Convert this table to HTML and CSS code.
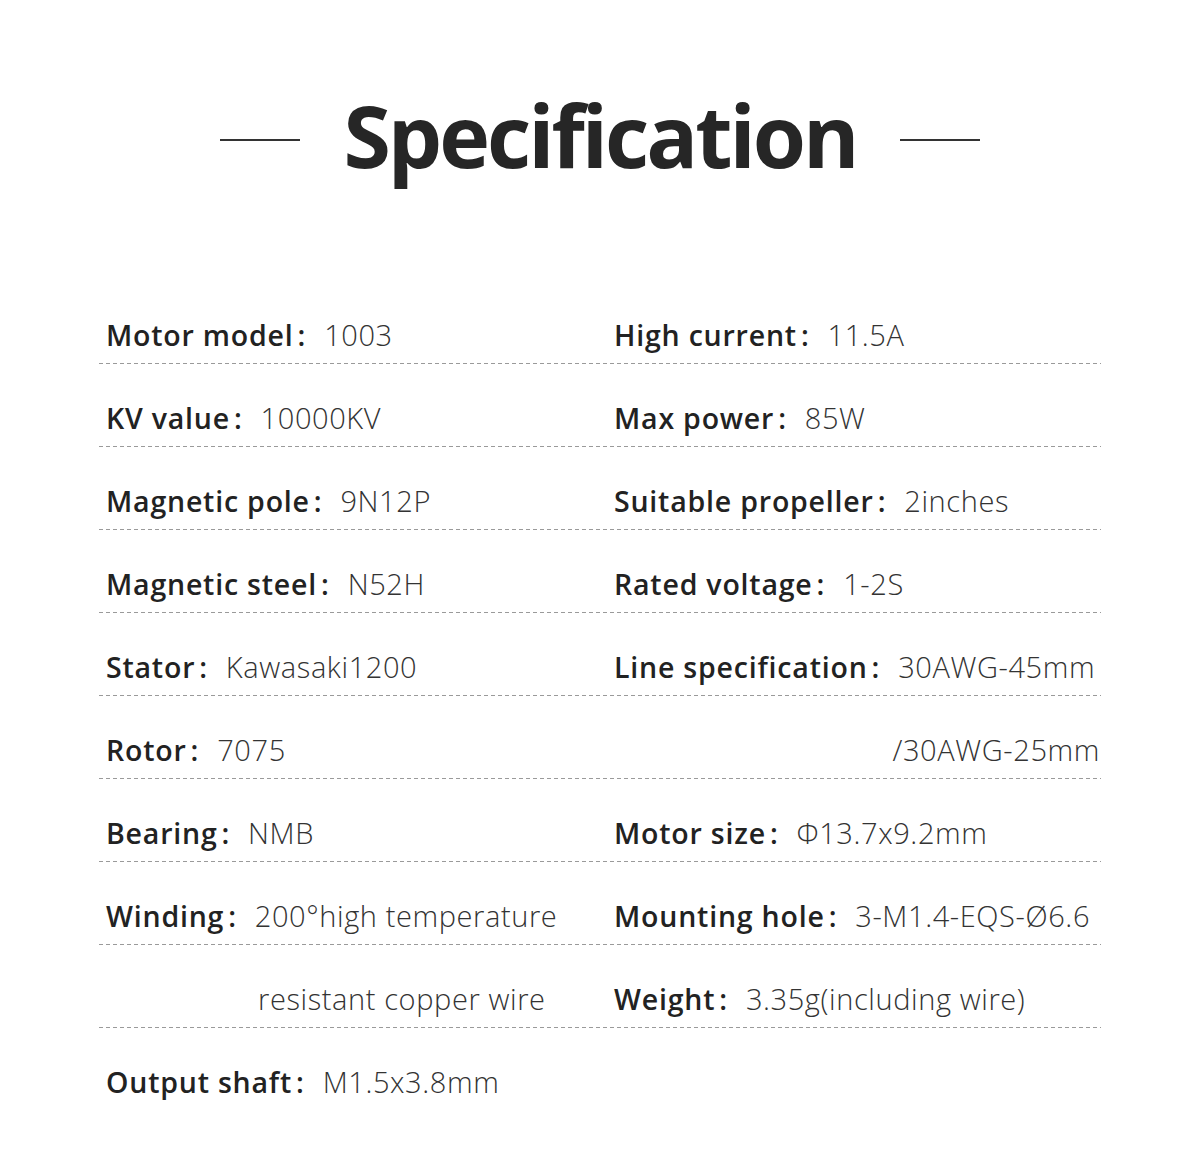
FILE: index.html
```html
<!DOCTYPE html>
<html>
<head>
<meta charset="utf-8">
<link rel="stylesheet" href="styles.css">
</head>
<body>
<div class="page">
  <header class="title-row">
    <span class="rule"></span>
    <h1 class="title">Specification</h1>
    <span class="rule"></span>
  </header>
  <section class="specs">
    <div class="row">
      <div class="cell"><span class="label">Motor model<span class="colon">:</span></span><span class="value">1003</span></div>
      <div class="cell"><span class="label">High current<span class="colon">:</span></span><span class="value">11.5A</span></div>
    </div>
    <div class="row">
      <div class="cell"><span class="label">KV value<span class="colon">:</span></span><span class="value">10000KV</span></div>
      <div class="cell"><span class="label">Max power<span class="colon">:</span></span><span class="value">85W</span></div>
    </div>
    <div class="row">
      <div class="cell"><span class="label">Magnetic pole<span class="colon">:</span></span><span class="value">9N12P</span></div>
      <div class="cell"><span class="label">Suitable propeller<span class="colon">:</span></span><span class="value">2inches</span></div>
    </div>
    <div class="row">
      <div class="cell"><span class="label">Magnetic steel<span class="colon">:</span></span><span class="value">N52H</span></div>
      <div class="cell"><span class="label">Rated voltage<span class="colon">:</span></span><span class="value">1-2S</span></div>
    </div>
    <div class="row">
      <div class="cell"><span class="label">Stator<span class="colon">:</span></span><span class="value">Kawasaki1200</span></div>
      <div class="cell"><span class="label">Line specification<span class="colon">:</span></span><span class="value">30AWG-45mm</span></div>
    </div>
    <div class="row">
      <div class="cell"><span class="label">Rotor<span class="colon">:</span></span><span class="value">7075</span></div>
      <div class="cell cell-right"><span class="value">/30AWG-25mm</span></div>
    </div>
    <div class="row">
      <div class="cell"><span class="label">Bearing<span class="colon">:</span></span><span class="value">NMB</span></div>
      <div class="cell"><span class="label">Motor size<span class="colon">:</span></span><span class="value">Φ13.7x9.2mm</span></div>
    </div>
    <div class="row">
      <div class="cell"><span class="label">Winding<span class="colon">:</span></span><span class="value">200°high temperature</span></div>
      <div class="cell"><span class="label">Mounting hole<span class="colon">:</span></span><span class="value">3-M1.4-EQS-Ø6.6</span></div>
    </div>
    <div class="row">
      <div class="cell"><span class="value cont">resistant copper wire</span></div>
      <div class="cell"><span class="label">Weight<span class="colon">:</span></span><span class="value">3.35g(including wire)</span></div>
    </div>
    <div class="row last">
      <div class="cell"><span class="label">Output shaft<span class="colon">:</span></span><span class="value">M1.5x3.8mm</span></div>
      <div class="cell"></div>
    </div>
  </section>
</div>
</body>
</html>
```
FILE: styles.css
```css
html, body {
  margin: 0;
  padding: 0;
  background: #ffffff;
}
body {
  width: 1200px;
  height: 1173px;
  font-family: "Open Sans", "Noto Sans", sans-serif;
  color: #222;
}
.page {
  padding-top: 83px;
}
.title-row {
  display: flex;
  align-items: center;
  justify-content: center;
  gap: 43px;
}
.rule {
  width: 80px;
  height: 2px;
  background: #333;
}
.title {
  margin: 0;
  padding-bottom: 10px;
  font-size: 86px;
  font-weight: 700;
  line-height: 104px;
  color: #262626;
  letter-spacing: -3px;
}
.specs {
  margin: 85px 99px 0 99px;
}
.row {
  display: grid;
  grid-template-columns: 508px 1fr;
  padding: 33px 0 9px 0;
  height: 40px;
  background-image: repeating-linear-gradient(to right, #9a9a9a 0 4px, transparent 4px 7px);
  background-size: 100% 1px;
  background-repeat: no-repeat;
  background-position: left bottom;
  border-bottom: 1px solid transparent;
}
.row.last {
  background-image: none;
}
.cell {
  display: flex;
  align-items: center;
  padding-left: 7px;
  line-height: 40px;
  white-space: nowrap;
}
.cell-right {
  justify-content: flex-end;
  padding-right: 1px;
}
.label {
  font-size: 28.5px;
  font-weight: 600;
  color: #222;
  letter-spacing: 0.8px;
  margin-right: 18px;
}
.colon {
  margin-left: 4px;
}
.value {
  font-size: 29px;
  font-weight: 300;
  color: #333;
  letter-spacing: 0.6px;
}
.cont {
  padding-left: 152px;
}
```
